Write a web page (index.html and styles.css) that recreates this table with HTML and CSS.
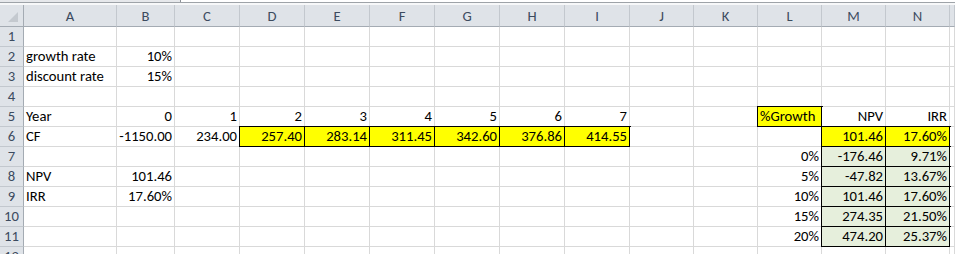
FILE: index.html
```html
<!DOCTYPE html>
<html>
<head>
<meta charset="utf-8">
<link rel="stylesheet" href="styles.css">
</head>
<body>
<div class="topbar"><div class="namebox"></div><div class="formula"></div></div>
<div class="topline"></div>
<div class="topgap"></div>
<div class="sheet">
  <div class="ch corner"><span class="tri"></span></div>
  <div class="ch">A</div><div class="ch">B</div><div class="ch">C</div><div class="ch">D</div><div class="ch">E</div><div class="ch">F</div><div class="ch">G</div><div class="ch">H</div><div class="ch">I</div><div class="ch">J</div><div class="ch">K</div><div class="ch">L</div><div class="ch">M</div><div class="ch">N</div><div class="ch last"></div>

  <div class="rh">1</div>
  <div class="c"></div><div class="c"></div><div class="c"></div><div class="c"></div><div class="c"></div><div class="c"></div><div class="c"></div><div class="c"></div><div class="c"></div><div class="c"></div><div class="c"></div><div class="c"></div><div class="c"></div><div class="c"></div><div class="c"></div>

  <div class="rh">2</div>
  <div class="c">growth rate</div><div class="c n">10%</div><div class="c"></div><div class="c"></div><div class="c"></div><div class="c"></div><div class="c"></div><div class="c"></div><div class="c"></div><div class="c"></div><div class="c"></div><div class="c"></div><div class="c"></div><div class="c"></div><div class="c"></div>

  <div class="rh">3</div>
  <div class="c">discount rate</div><div class="c n">15%</div><div class="c"></div><div class="c"></div><div class="c"></div><div class="c"></div><div class="c"></div><div class="c"></div><div class="c"></div><div class="c"></div><div class="c"></div><div class="c"></div><div class="c"></div><div class="c"></div><div class="c"></div>

  <div class="rh">4</div>
  <div class="c"></div><div class="c"></div><div class="c"></div><div class="c"></div><div class="c"></div><div class="c"></div><div class="c"></div><div class="c"></div><div class="c"></div><div class="c"></div><div class="c"></div><div class="c"></div><div class="c"></div><div class="c"></div><div class="c"></div>

  <div class="rh">5</div>
  <div class="c">Year</div><div class="c n">0</div><div class="c n">1</div><div class="c n">2</div><div class="c n">3</div><div class="c n">4</div><div class="c n">5</div><div class="c n">6</div><div class="c n">7</div><div class="c"></div><div class="c"></div><div class="c y">%Growth</div><div class="c n">NPV</div><div class="c n">IRR</div><div class="c"></div>

  <div class="rh">6</div>
  <div class="c">CF</div><div class="c n">-1150.00</div><div class="c n">234.00</div><div class="c n y">257.40</div><div class="c n y">283.14</div><div class="c n y">311.45</div><div class="c n y">342.60</div><div class="c n y">376.86</div><div class="c n y">414.55</div><div class="c"></div><div class="c"></div><div class="c"></div><div class="c n y">101.46</div><div class="c n y">17.60%</div><div class="c"></div>

  <div class="rh">7</div>
  <div class="c"></div><div class="c"></div><div class="c"></div><div class="c"></div><div class="c"></div><div class="c"></div><div class="c"></div><div class="c"></div><div class="c"></div><div class="c"></div><div class="c"></div><div class="c n">0%</div><div class="c n g">-176.46</div><div class="c n g">9.71%</div><div class="c"></div>

  <div class="rh">8</div>
  <div class="c">NPV</div><div class="c n">101.46</div><div class="c"></div><div class="c"></div><div class="c"></div><div class="c"></div><div class="c"></div><div class="c"></div><div class="c"></div><div class="c"></div><div class="c"></div><div class="c n">5%</div><div class="c n g">-47.82</div><div class="c n g">13.67%</div><div class="c"></div>

  <div class="rh">9</div>
  <div class="c">IRR</div><div class="c n">17.60%</div><div class="c"></div><div class="c"></div><div class="c"></div><div class="c"></div><div class="c"></div><div class="c"></div><div class="c"></div><div class="c"></div><div class="c"></div><div class="c n">10%</div><div class="c n g">101.46</div><div class="c n g">17.60%</div><div class="c"></div>

  <div class="rh">10</div>
  <div class="c"></div><div class="c"></div><div class="c"></div><div class="c"></div><div class="c"></div><div class="c"></div><div class="c"></div><div class="c"></div><div class="c"></div><div class="c"></div><div class="c"></div><div class="c n">15%</div><div class="c n g">274.35</div><div class="c n g">21.50%</div><div class="c"></div>

  <div class="rh">11</div>
  <div class="c"></div><div class="c"></div><div class="c"></div><div class="c"></div><div class="c"></div><div class="c"></div><div class="c"></div><div class="c"></div><div class="c"></div><div class="c"></div><div class="c"></div><div class="c n">20%</div><div class="c n g">474.20</div><div class="c n g">25.37%</div><div class="c"></div>

  <div class="rh">12</div>
  <div class="c"></div><div class="c"></div><div class="c"></div><div class="c"></div><div class="c"></div><div class="c"></div><div class="c"></div><div class="c"></div><div class="c"></div><div class="c"></div><div class="c"></div><div class="c"></div><div class="c"></div><div class="c"></div><div class="c"></div>
</div>
</body>
</html>
```

FILE: styles.css
```css
html, body {
  margin: 0;
  padding: 0;
  background: #ffffff;
  width: 955px;
  height: 254px;
  overflow: hidden;
}

body {
  font-family: Carlito, Lato, "Noto Sans", sans-serif;
  font-size: 14.67px;
  color: #000000;
}

.topbar {
  display: flex;
  height: 2px;
}

.namebox {
  width: 180px;
  background: #e6e8eb;
}

.formula {
  flex: 1;
  border-left: 1px solid #8c9197;
  background: #ffffff;
}

.topline {
  height: 1px;
  background: #9ea3a8;
}

.topgap {
  height: 2px;
  background: #f7f8f9;
}

.sheet {
  display: grid;
  grid-template-columns: 24px 93px 58px 65px 65px 65px 65px 65px 65px 65px 64px 64px 64px 64px 64px 1fr;
  grid-template-rows: 22px;
  grid-auto-rows: 20px;
}

.sheet > div {
  box-sizing: border-box;
  border-right: 1px solid #d9d9d9;
  border-bottom: 1px solid #d9d9d9;
  background: #ffffff;
  white-space: nowrap;
  overflow: visible;
  line-height: 19px;
}

.sheet > .ch {
  background: #dfe3e8;
  border-right-color: #c3c8ce;
  border-bottom-color: #a4abb3;
  color: #3c4b5f;
  text-align: center;
  padding-top: 2px;
  line-height: 19px;
}

.sheet > .corner {
  border-right-color: #a4abb3;
  display: flex;
  justify-content: flex-end;
  align-items: flex-end;
  padding: 0 5px 4px 0;
}

.tri {
  width: 0;
  height: 0;
  border-left: 10px solid transparent;
  border-bottom: 10px solid #c4c9cf;
}

.sheet > .rh {
  background: #dfe3e8;
  border-right-color: #a4abb3;
  border-bottom-color: #c3c8ce;
  color: #3c4b5f;
  text-align: center;
}

.c {
  padding: 0 2px 0 2px;
}

.n {
  text-align: right;
}

.sheet > .y {
  background: #ffff00;
  border-right-color: #000000;
  border-bottom-color: #000000;
  box-shadow: 0 0 0 1px #000000;
}

.sheet > .g {
  background: #e6efdc;
  border-right-color: #000000;
  border-bottom-color: #000000;
  box-shadow: 0 0 0 1px #000000;
}
```
